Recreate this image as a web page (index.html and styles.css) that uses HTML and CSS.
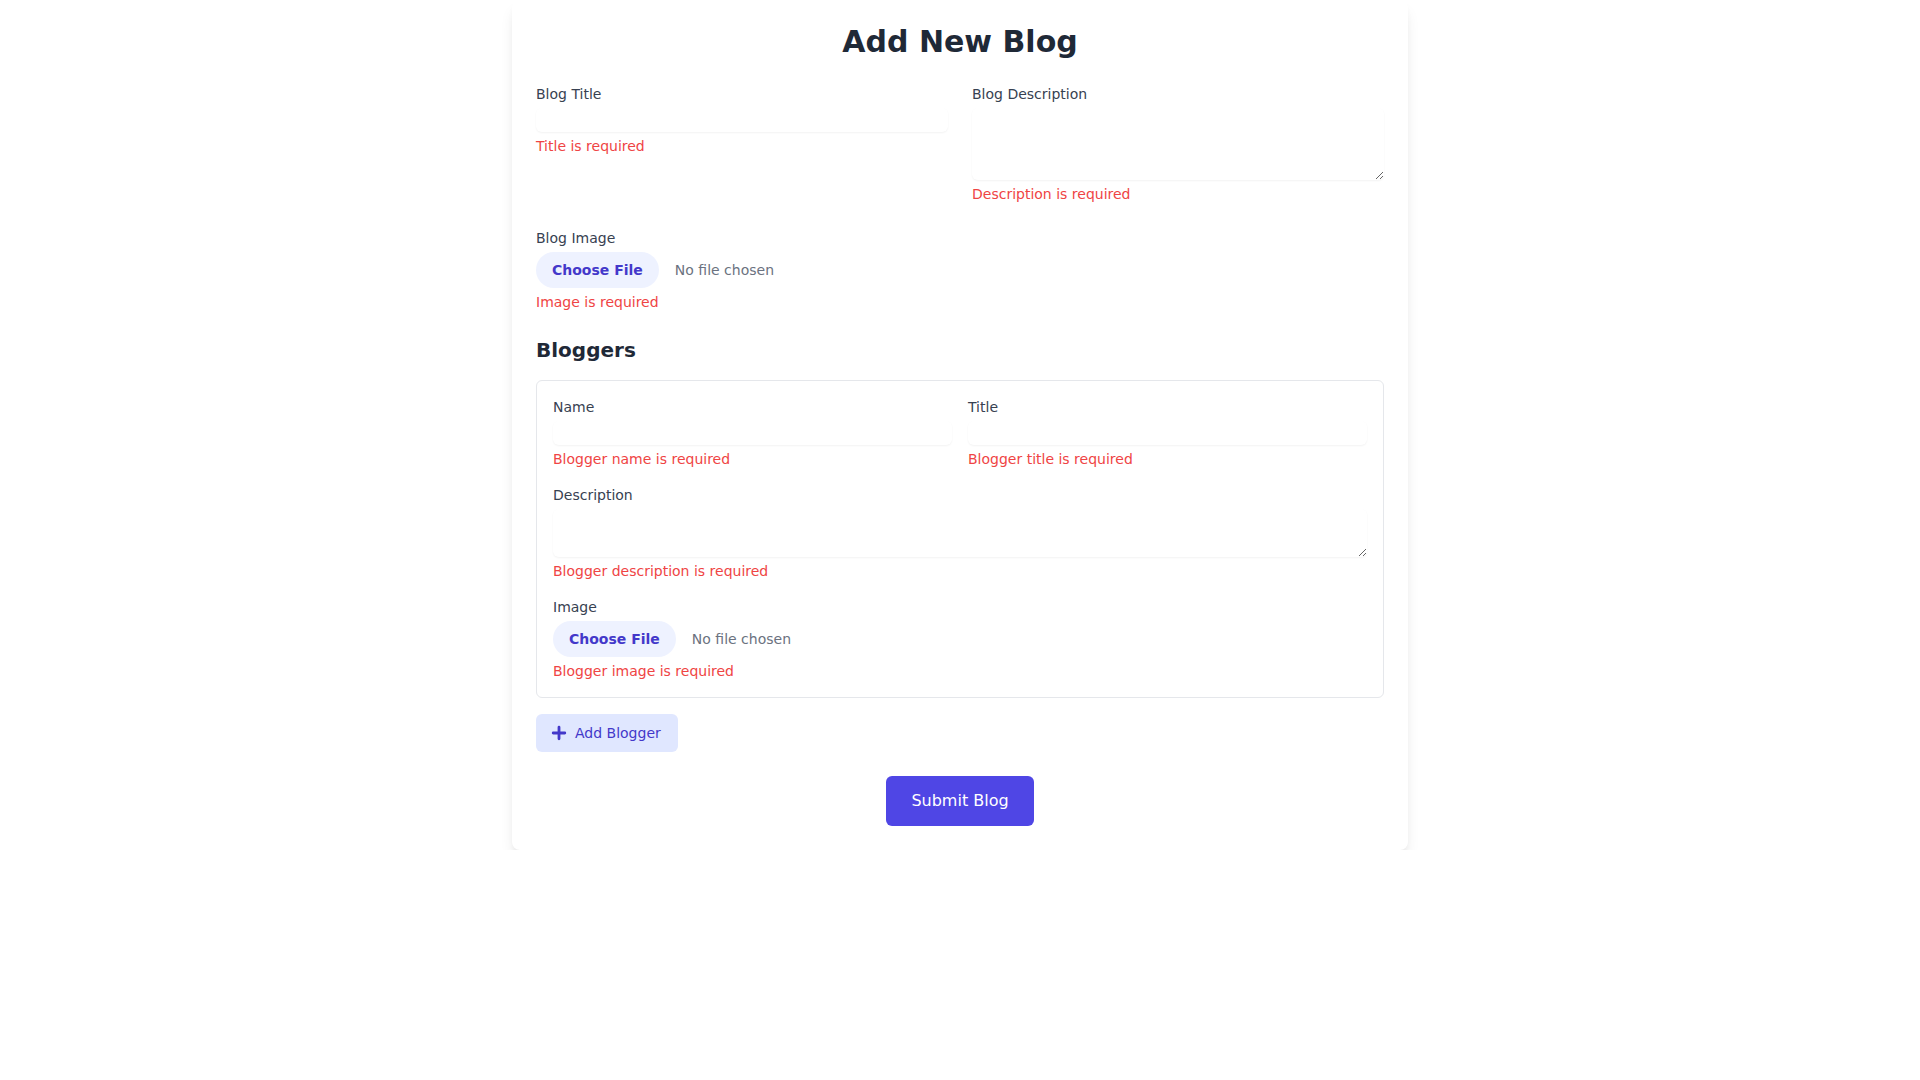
FILE: index.html
```html
<!DOCTYPE html>
<html lang="en">
<head>
<meta charset="utf-8">
<title>Add New Blog</title>
<link rel="stylesheet" href="styles.css">
</head>
<body>
<div class="card">
  <h1 class="page-title">Add New Blog</h1>
  <form class="form">
    <div class="grid-two">
      <div class="field">
        <label class="label">Blog Title</label>
        <input class="text-input" type="text">
        <p class="error">Title is required</p>
      </div>
      <div class="field">
        <label class="label">Blog Description</label>
        <textarea class="text-input area-3" rows="3"></textarea>
        <p class="error">Description is required</p>
      </div>
    </div>

    <div class="field">
      <label class="label">Blog Image</label>
      <input class="file-input" type="file">
      <p class="error">Image is required</p>
    </div>

    <div class="bloggers">
      <h2 class="section-title">Bloggers</h2>
      <div class="blogger-box">
        <div class="grid-two grid-tight">
          <div class="field">
            <label class="label">Name</label>
            <input class="text-input" type="text">
            <p class="error">Blogger name is required</p>
          </div>
          <div class="field">
            <label class="label">Title</label>
            <input class="text-input" type="text">
            <p class="error">Blogger title is required</p>
          </div>
        </div>
        <div class="field">
          <label class="label">Description</label>
          <textarea class="text-input area-2" rows="2"></textarea>
          <p class="error">Blogger description is required</p>
        </div>
        <div class="field">
          <label class="label">Image</label>
          <input class="file-input" type="file">
          <p class="error">Blogger image is required</p>
        </div>
      </div>
      <button type="button" class="add-btn">
        <svg class="add-icon" viewBox="0 0 20 20" aria-hidden="true"><path d="M10 4.2v11.6M4.2 10h11.6" fill="none" stroke="currentColor" stroke-width="2.8" stroke-linecap="round"/></svg>
        Add Blogger
      </button>
    </div>

    <div class="submit-row">
      <button type="submit" class="submit-btn">Submit Blog</button>
    </div>
  </form>
</div>
</body>
</html>
```

FILE: styles.css
```css
* { box-sizing: border-box; }

html, body {
  margin: 0;
  padding: 0;
  background: #ffffff;
  font-family: "DejaVu Sans", sans-serif;
}

.card {
  width: 896px;
  margin: 0 auto;
  padding: 24px;
  background: #ffffff;
  border-radius: 8px;
  box-shadow: 0 10px 15px -3px rgba(0,0,0,0.1), 0 4px 6px -2px rgba(0,0,0,0.05);
}

.page-title {
  margin: 0 0 24px;
  font-size: 30px;
  line-height: 36px;
  font-weight: 700;
  text-align: center;
  color: #1f2937;
}

.form {
  display: flex;
  flex-direction: column;
  gap: 24px;
}

.grid-two {
  display: grid;
  grid-template-columns: 1fr 1fr;
  gap: 24px;
  align-items: start;
}

.grid-tight { gap: 16px; }

.field { display: block; }

.label {
  display: block;
  margin-bottom: 4px;
  font-size: 14px;
  line-height: 20px;
  font-weight: 400;
  color: #374151;
}

.text-input {
  display: block;
  width: 100%;
  margin: 0;
  padding: 0;
  border: 0;
  border-radius: 6px;
  font-family: inherit;
  font-size: 16px;
  line-height: 24px;
  color: #111827;
  background: #ffffff;
  box-shadow: 0 1px 2px 0 rgba(0,0,0,0.05);
  outline: none;
}

textarea.text-input { resize: vertical; }
.area-3 { height: 72px; }
.area-2 { height: 48px; }

.file-input {
  display: block;
  width: 100%;
  font-family: inherit;
  font-size: 14px;
  line-height: 20px;
  color: #6b7280;
}

.file-input::file-selector-button {
  margin-right: 16px;
  padding: 8px 16px;
  border: 0;
  border-radius: 9999px;
  font-family: inherit;
  font-size: 14px;
  line-height: 20px;
  font-weight: 600;
  background: #eef2ff;
  color: #4338ca;
}

.error {
  margin: 4px 0 0;
  font-size: 14px;
  line-height: 20px;
  color: #ef4444;
}

.bloggers {
  display: flex;
  flex-direction: column;
  align-items: stretch;
}

.section-title {
  margin: 0 0 16px;
  font-size: 20px;
  line-height: 28px;
  font-weight: 600;
  color: #1f2937;
}

.blogger-box {
  display: flex;
  flex-direction: column;
  gap: 16px;
  padding: 16px;
  border: 1px solid #e5e7eb;
  border-radius: 6px;
}

.add-btn {
  align-self: flex-start;
  display: inline-flex;
  align-items: center;
  margin-top: 16px;
  padding: 8px 16px;
  border: 1px solid transparent;
  border-radius: 6px;
  background: #e0e7ff;
  color: #4338ca;
  font-family: inherit;
  font-size: 14px;
  line-height: 20px;
  font-weight: 400;
}

.add-icon {
  width: 20px;
  height: 20px;
  margin-left: -4px;
  margin-right: 6px;
}

.submit-row { text-align: center; }

.submit-btn {
  display: inline-block;
  padding: 12px 24px;
  border: 1px solid transparent;
  border-radius: 6px;
  background: #4f46e5;
  color: #ffffff;
  font-family: inherit;
  font-size: 16px;
  line-height: 24px;
  font-weight: 400;
}
```
